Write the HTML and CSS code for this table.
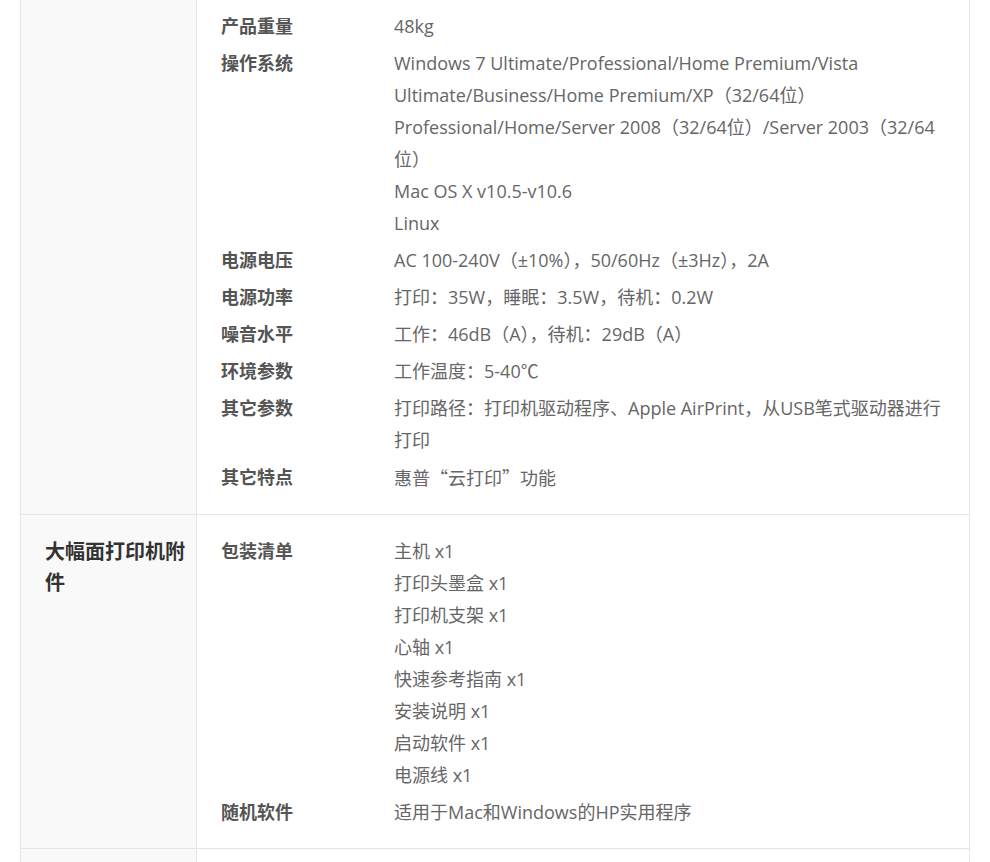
FILE: index.html
```html
<!DOCTYPE html>
<html lang="zh-CN">
<head>
  <meta charset="UTF-8">
  <meta name="viewport" content="width=device-width, initial-scale=1.0">
  <title>规格参数</title>
  <link rel="stylesheet" href="styles.css">
</head>
<body>
  <div class="specs">
    <div class="spec-group spec-group--cut">
      <div class="group-title"></div>
      <div class="group-body">
        <div class="spec-row">
          <div class="spec-name">产品重量</div>
          <div class="spec-value">48kg</div>
        </div>
        <div class="spec-row">
          <div class="spec-name">操作系统</div>
          <div class="spec-value">
            Windows 7 Ultimate/Professional/Home Premium/Vista<br>
            Ultimate/Business/Home Premium/XP（32/64位）<br>
            Professional/Home/Server 2008（32/64位）/Server 2003（32/64<br>位）<br>
            Mac OS X v10.5-v10.6<br>
            Linux
          </div>
        </div>
        <div class="spec-row">
          <div class="spec-name">电源电压</div>
          <div class="spec-value">AC 100-240V（±10%），50/60Hz（±3Hz），2A</div>
        </div>
        <div class="spec-row">
          <div class="spec-name">电源功率</div>
          <div class="spec-value">打印：35W，睡眠：3.5W，待机：0.2W</div>
        </div>
        <div class="spec-row">
          <div class="spec-name">噪音水平</div>
          <div class="spec-value">工作：46dB（A），待机：29dB（A）</div>
        </div>
        <div class="spec-row">
          <div class="spec-name">环境参数</div>
          <div class="spec-value">工作温度：5-40℃</div>
        </div>
        <div class="spec-row">
          <div class="spec-name">其它参数</div>
          <div class="spec-value">打印路径：打印机驱动程序、Apple AirPrint，从USB笔式驱动器进行<br>打印</div>
        </div>
        <div class="spec-row">
          <div class="spec-name">其它特点</div>
          <div class="spec-value">惠普<span class="cjk">“云打印”</span>功能</div>
        </div>
      </div>
    </div>

    <div class="spec-group">
      <div class="group-title">大幅面打印机附件</div>
      <div class="group-body">
        <div class="spec-row">
          <div class="spec-name">包装清单</div>
          <div class="spec-value">
            主机 x1<br>
            打印头墨盒 x1<br>
            打印机支架 x1<br>
            心轴 x1<br>
            快速参考指南 x1<br>
            安装说明 x1<br>
            启动软件 x1<br>
            电源线 x1
          </div>
        </div>
        <div class="spec-row">
          <div class="spec-name">随机软件</div>
          <div class="spec-value">适用于Mac和Windows的HP实用程序</div>
        </div>
      </div>
    </div>

    <!-- next group starts just below the fold -->
    <div class="spec-group spec-group--next">
      <div class="group-title"></div>
      <div class="group-body"></div>
    </div>
  </div>
</body>
</html>
```

FILE: styles.css
```css
* {
  margin: 0;
  padding: 0;
  box-sizing: border-box;
}

body {
  background: #fff;
  font-family: "Open Sans", "Noto Sans CJK SC", sans-serif;
  color: #666;
}

.specs {
  width: 950px;
  margin: 0 20px;
  border-left: 1px solid #e5e5e5;
  border-right: 1px solid #e5e5e5;
}

.spec-group {
  display: grid;
  grid-template-columns: 176px 1fr;
  border-bottom: 1px solid #e5e5e5;
}

.group-title {
  background: #f9f9f9;
  border-right: 1px solid #e5e5e5;
  padding: 21px 4px 0 24px;
  font-size: 20px;
  font-weight: bold;
  line-height: 31px;
  color: #333;
}

.group-body {
  padding: 18px 24px 17px;
}

.spec-group--cut .group-body {
  padding-top: 8px;
}

.spec-group--next {
  min-height: 40px;
  border-bottom: none;
}

.spec-row {
  display: grid;
  grid-template-columns: 173px 1fr;
  padding: 2px 0 3px;
  font-size: 18px;
  line-height: 32px;
}

.spec-name {
  font-weight: bold;
  color: #555;
}

.spec-value {
  color: #666;
}

.cjk {
  font-family: "Noto Sans CJK SC", sans-serif;
}
```
